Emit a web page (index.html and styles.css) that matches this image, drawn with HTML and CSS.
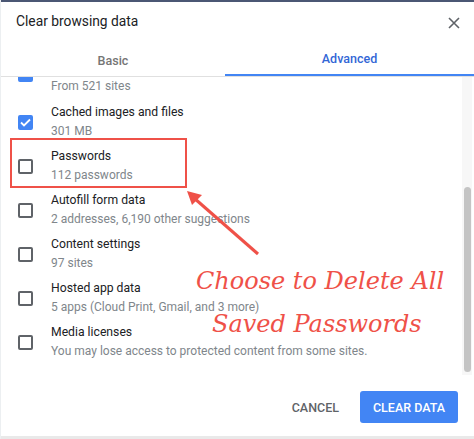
FILE: index.html
```html
<!DOCTYPE html>
<html>
<head>
<meta charset="utf-8">
<link rel="stylesheet" href="styles.css">
</head>
<body>
<div class="dialog">
  <div class="topbar"></div>
  <div class="header">
    <div class="title">Clear browsing data</div>
    <svg class="close" width="14" height="14" viewBox="0 0 14 14"><path d="M2 2 L12 12 M12 2 L2 12" stroke="#5f6368" stroke-width="1.6" fill="none"/></svg>
  </div>
  <div class="tabs">
    <div class="tab basic">Basic</div>
    <div class="tab active">Advanced</div>
  </div>
  <div class="body">
    <div class="list">
      <div class="item partial"><span class="box checked"></span><div class="txt"><div class="pri"></div><div class="sec">From 521 sites</div></div></div>
      <div class="item"><span class="box checked"><svg width="11" height="9" viewBox="0 0 11 9"><path d="M1 4.5 L4 7.5 L10 1.5" stroke="#fff" stroke-width="1.8" fill="none"/></svg></span><div class="txt"><div class="pri">Cached images and files</div><div class="sec">301 MB</div></div></div>
      <div class="item"><span class="box"></span><div class="txt"><div class="pri">Passwords</div><div class="sec">112 passwords</div></div></div>
      <div class="item"><span class="box"></span><div class="txt"><div class="pri">Autofill form data</div><div class="sec">2 addresses, 6,190 other suggestions</div></div></div>
      <div class="item"><span class="box"></span><div class="txt"><div class="pri">Content settings</div><div class="sec">97 sites</div></div></div>
      <div class="item"><span class="box"></span><div class="txt"><div class="pri">Hosted app data</div><div class="sec">5 apps (Cloud Print, Gmail, and 3 more)</div></div></div>
      <div class="item"><span class="box"></span><div class="txt"><div class="pri">Media licenses</div><div class="sec">You may lose access to protected content from some sites.</div></div></div>
    </div>
    <div class="scrollbar"><div class="thumb"></div></div>
  </div>
  <div class="footer">
    <button class="btn cancel">CANCEL</button>
    <button class="btn primary">CLEAR DATA</button>
  </div>
  <div class="bottomline"></div>

  <div class="redbox"></div>
  <svg class="arrow" width="474" height="439" viewBox="0 0 474 439">
    <line x1="258" y1="254" x2="194" y2="198" stroke="#ef5148" stroke-width="3"/>
    <path d="M187 191 L202 195 L192 205 Z" fill="#ef5148"/>
  </svg>
  <div class="note">
    <div class="l1">Choose to Delete All</div>
    <div class="l2">Saved Passwords</div>
  </div>
</div>
</body>
</html>
```
FILE: styles.css
```css
* { box-sizing: border-box; }
html, body { margin: 0; padding: 0; background: #fff; }
body { width: 474px; height: 439px; overflow: hidden; font-family: Roboto, "Liberation Sans", sans-serif; }
.dialog { position: relative; width: 474px; height: 439px; border-left: 1px solid #eceff1; display: flex; flex-direction: column; }
.topbar { height: 2px; background: #4b5774; flex: none; }
.header { height: 38px; display: flex; align-items: center; justify-content: space-between; padding: 0 13px 0 15px; flex: none; }
.title { font-size: 13.8px; color: #202124; }
.close { margin-top: 4px; }
.tabs { display: flex; height: 37px; border-bottom: 1px solid #e0e0e0; flex: none; }
.tab { display: flex; align-items: center; justify-content: center; font-size: 12.5px; font-weight: 500; color: #757575; padding-top: 4px; }
.tab.basic { width: 224px; flex: none; }
.tab.active { flex: 1; color: #3367d6; border-bottom: 2px solid #4285f4; padding-top: 2px; }
.body { position: relative; height: 298px; overflow: hidden; flex: none; display: flex; }
.list { flex: 1; }
.item { height: 44px; display: flex; align-items: center; padding-left: 17px; }
.item.partial { height: 23px; align-items: flex-end; position: relative; }
.item.partial .box { position: absolute; left: 17px; top: -10px; }
.item.partial .txt { margin-left: 33px; margin-bottom: 4px; }
.item.partial .pri { display: none; }
.box { width: 15px; height: 15px; border: 2px solid #5f6368; border-radius: 2px; flex: none; margin-right: 18px; display: flex; align-items: center; justify-content: center; }
.box.checked { background: #4285f4; border-color: #4285f4; }
.txt { display: flex; flex-direction: column; }
.pri { font-size: 12.2px; line-height: 19px; color: #202124; }
.sec { font-size: 12px; line-height: 19px; color: #80868b; }
.scrollbar { width: 10px; height: 298px; background: #f7f7f7; flex: none; margin-right: 2px; position: relative; }
.thumb { position: absolute; left: 2px; right: 1px; top: 110px; bottom: 3px; background: #c4c4c4; border-radius: 4px; }
.footer { flex: 1; display: flex; justify-content: flex-end; align-items: center; padding: 3px 16px 0 0; }
.btn { font-family: Roboto, "Liberation Sans", sans-serif; font-size: 12.5px; font-weight: 500; border: none; border-radius: 3px; height: 32px; padding: 0 16px; cursor: pointer; }
.cancel { background: transparent; color: #5f6368; margin-right: 5px; }
.primary { background: #4285f4; color: #fff; width: 98px; padding: 0; }
.bottomline { height: 3px; background: #e9e9e9; flex: none; }
.redbox { position: absolute; left: 9px; top: 138px; width: 177px; height: 50px; border: 2px solid #ef5148; }
.arrow { position: absolute; left: -1px; top: 0; pointer-events: none; }
.note { position: absolute; left: 195px; top: 260px; font-family: "DejaVu Serif", serif; font-style: italic; color: #ef5148; font-size: 24px; line-height: 43px; }
.note .l2 { padding-left: 16px; }
```
